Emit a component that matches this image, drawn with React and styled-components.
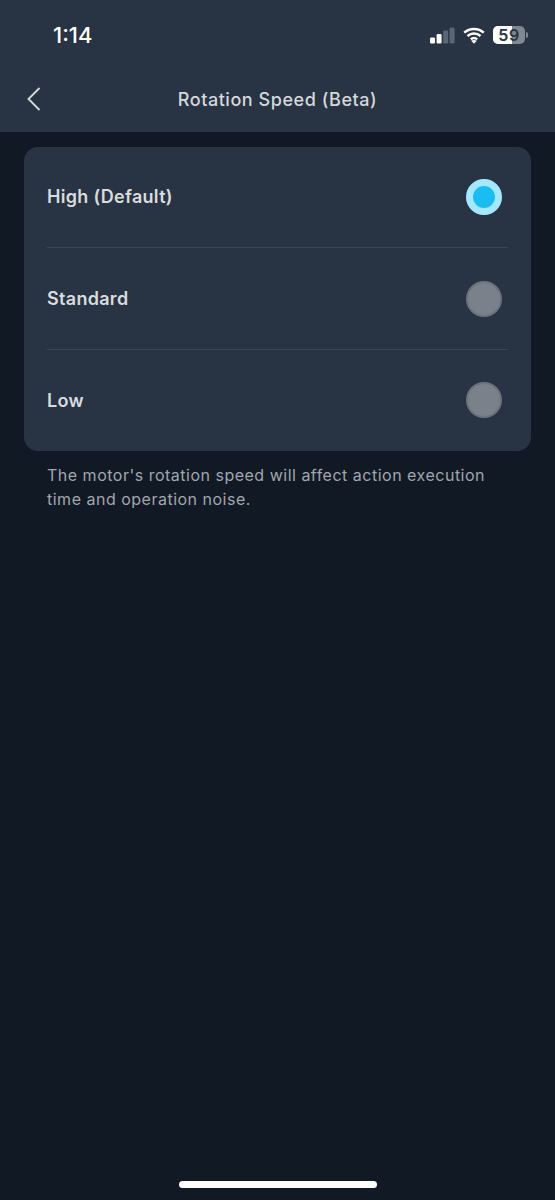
import styled, { createGlobalStyle } from "styled-components";

const options = [
    { label: "High (Default)", active: true },
    { label: "Standard", active: false },
    { label: "Low", active: false },
];

export default function App() {
    return (
        <Page>
            <GlobalStyle />
            <Header>
                <StatusBar>
                    <Time>1:14</Time>
                    <StatusIcons>
                        <svg width="25" height="17" viewBox="0 0 25 17">
                            <rect x="0" y="10.5" width="5" height="6" rx="1.2" fill="#fff" />
                            <rect x="6.6" y="7" width="5" height="9.5" rx="1.2" fill="#fff" />
                            <rect x="13.2" y="3.5" width="5" height="13" rx="1.2" fill="#5a6675" />
                            <rect x="19.6" y="0.5" width="5" height="16" rx="1.2" fill="#5a6675" />
                        </svg>
                        <svg width="22" height="17" viewBox="0 0 22 17">
                            <path d="M1.2 5.6C6.8.7 15.2.7 20.8 5.6M4.5 9C8.2 5.8 13.8 5.8 17.5 9M7.8 12.2C9.7 10.7 12.3 10.7 14.2 12.2" fill="none" stroke="#fff" strokeWidth="2.5" />
                            <path d="M11 16.8L8.2 13.8C9.8 12.6 12.2 12.6 13.8 13.8Z" fill="#fff" />
                        </svg>
                        <Battery>
                            <BatteryBody>
                                <BatteryFill style={{ width: "59%" }} />
                                <BatteryText>59</BatteryText>
                            </BatteryBody>
                            <BatteryTip />
                        </Battery>
                    </StatusIcons>
                </StatusBar>
                <NavBar>
                    <BackButton>
                        <svg width="16" height="26" viewBox="0 0 16 26">
                            <path d="M13.5 2L2.5 13L13.5 24" fill="none" stroke="#d5d8dc" strokeWidth="1.9" />
                        </svg>
                    </BackButton>
                    <Title>Rotation Speed (Beta)</Title>
                </NavBar>
            </Header>
            <Content>
                <Card>
                    {options.map((option) => (
                        <Row key={option.label}>
                            <Label>{option.label}</Label>
                            <Radio $active={option.active} />
                        </Row>
                    ))}
                </Card>
                <Note>The motor's rotation speed will affect action execution time and operation noise.</Note>
            </Content>
            <HomeBar />
        </Page>
    );
}

const GlobalStyle = createGlobalStyle`
    html, body {
        margin: 0;
        padding: 0;
        background: #111924;
    }
    * {
        box-sizing: border-box;
    }
`;

const Page = styled.div`
    width: 555px;
    height: 1200px;
    display: flex;
    flex-direction: column;
    background: #111924;
    font-family: Inter, "Liberation Sans", sans-serif;
`;

const Header = styled.header`
    height: 132px;
    display: flex;
    flex-direction: column;
    background: #283343;
`;

const StatusBar = styled.div`
    height: 70px;
    display: flex;
    align-items: center;
    justify-content: space-between;
    padding: 0 27px 0 53px;
`;

const Time = styled.span`
    font-size: 22px;
    font-weight: 500;
    color: #fff;
`;

const StatusIcons = styled.div`
    display: flex;
    align-items: center;
    gap: 8px;
`;

const Battery = styled.div`
    display: flex;
    align-items: center;
    gap: 1px;
`;

const BatteryBody = styled.div`
    position: relative;
    width: 32px;
    height: 18px;
    border-radius: 5px;
    overflow: hidden;
    background: #7f8791;
    display: flex;
    align-items: center;
    justify-content: center;
`;

const BatteryFill = styled.div`
    position: absolute;
    left: 0;
    top: 0;
    bottom: 0;
    background: #fff;
`;

const BatteryText = styled.span`
    position: relative;
    font-size: 16px;
    font-weight: 600;
    letter-spacing: 0.5px;
    color: #283343;
`;

const BatteryTip = styled.div`
    width: 2px;
    height: 6px;
    border-radius: 0 2px 2px 0;
    background: #7f8791;
`;

const NavBar = styled.nav`
    position: relative;
    flex: 1;
    display: flex;
    align-items: center;
    justify-content: center;
    padding-bottom: 4px;
`;

const BackButton = styled.div`
    position: absolute;
    left: 26px;
    top: 16px;
    display: flex;
`;

const Title = styled.h1`
    margin: 0;
    font-size: 18px;
    font-weight: 500;
    letter-spacing: 0.55px;
    color: #d5d8dc;
`;

const Content = styled.main`
    flex: 1;
    display: flex;
    flex-direction: column;
    padding: 14.5px 24px 0;
`;

const Card = styled.section`
    height: 304px;
    padding: 0 23px;
    display: flex;
    flex-direction: column;
    border-radius: 14px;
    background: #283343;
`;

const Row = styled.div`
    flex: 1;
    display: flex;
    align-items: center;
    justify-content: space-between;
    padding-right: 6px;
    border-bottom: 1px solid #3a4453;

    &:last-child {
        border-bottom: none;
    }
`;

const Label = styled.span`
    font-size: 18px;
    font-weight: 600;
    letter-spacing: 0.3px;
    color: #d9dcdf;
`;

const Radio = styled.div`
    width: 36px;
    height: 36px;
    border-radius: 50%;
    background: ${(props) => (props.$active ? "#1bbcf2" : "#7a818b")};
    border: ${(props) => (props.$active ? "7px solid #a4e8ff" : "2px solid #6c737e")};
`;

const Note = styled.p`
    margin: 13.5px 23px 0;
    font-size: 16px;
    line-height: 23.5px;
    letter-spacing: 0.5px;
    color: #a1a6ad;
`;

const HomeBar = styled.div`
    width: 198px;
    height: 7px;
    margin: 0 auto 12px;
    border-radius: 4px;
    background: #fff;
`;
